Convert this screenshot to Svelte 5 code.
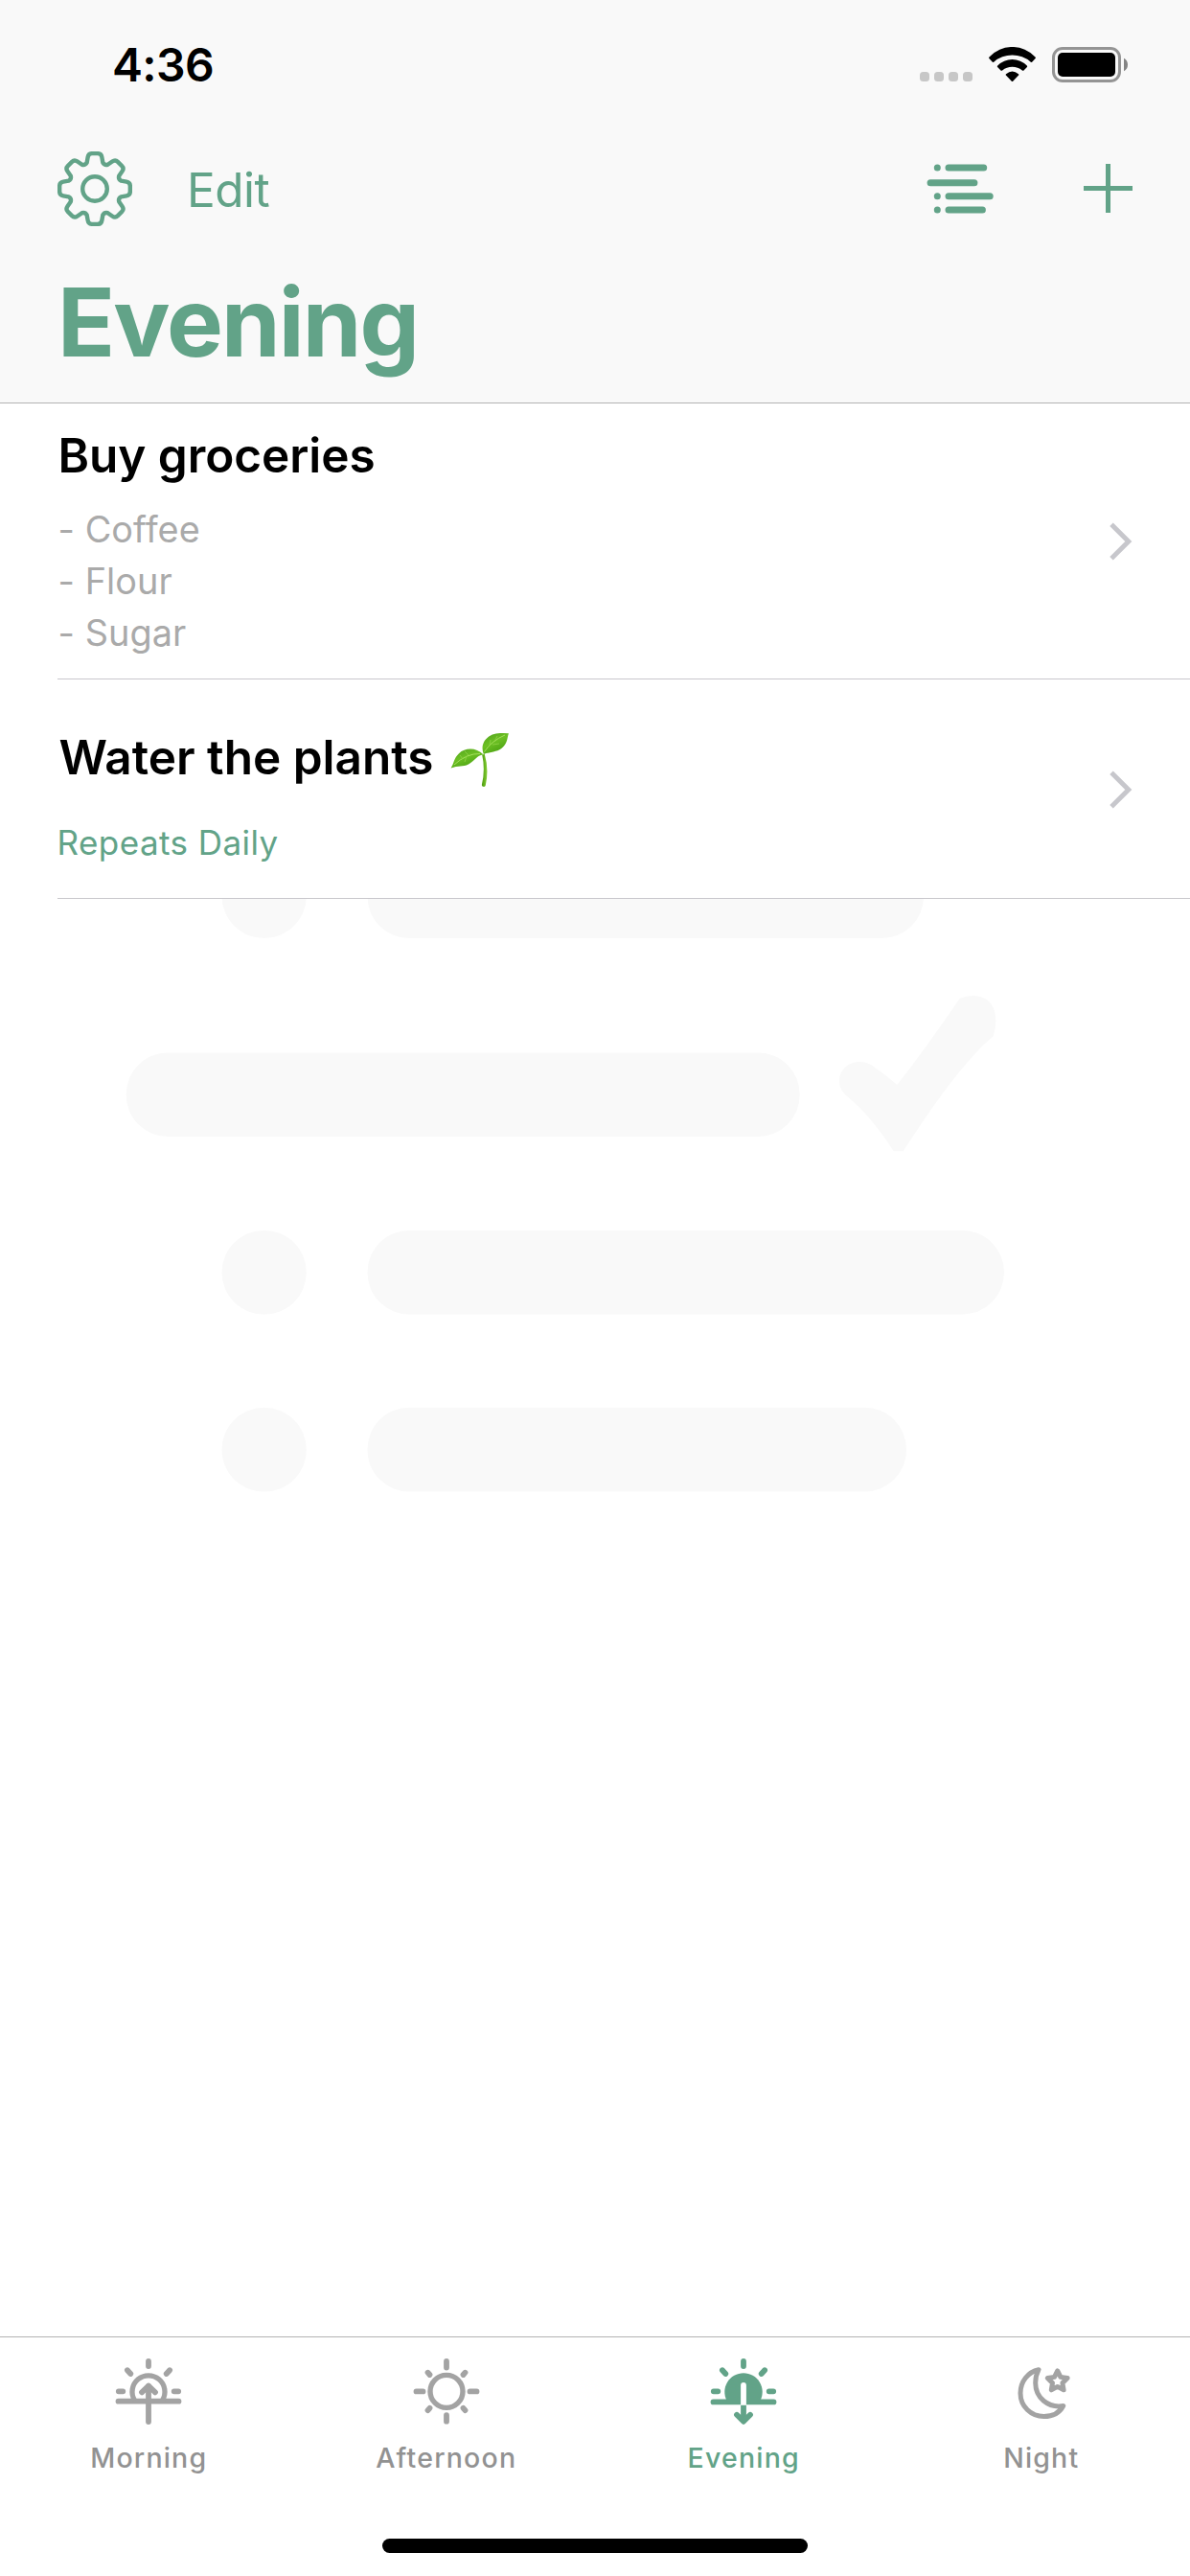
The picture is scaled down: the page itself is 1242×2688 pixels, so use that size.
<script>
  const tasks = [
    { title: 'Buy groceries', notes: ['- Coffee', '- Flour', '- Sugar'] },
    { title: 'Water the plants', sprout: true, repeats: 'Repeats Daily' }
  ];

  const tabs = [
    { id: 'morning', label: 'Morning' },
    { id: 'afternoon', label: 'Afternoon' },
    { id: 'evening', label: 'Evening' },
    { id: 'night', label: 'Night' }
  ];

  let active = $state('evening');

  // Eight-toothed cog outline: one tooth, rotated in 45° steps.
  function cog() {
    const rot = (x, y, k) => {
      const a = (k * Math.PI) / 4;
      const rx = x * Math.cos(a) - y * Math.sin(a);
      const ry = x * Math.sin(a) + y * Math.cos(a);
      return `${(rx / 3).toFixed(2)} ${(ry / 3).toFixed(2)}`;
    };
    let d = `M${rot(-25, -82, 0)}`;
    for (let k = 0; k < 8; k++) {
      const p = (x, y) => rot(x, y, k);
      d += `L${p(-22, -99)}Q${p(-20, -110.5)} ${p(-9, -110.5)}L${p(9, -110.5)}`;
      d += `Q${p(20, -110.5)} ${p(22, -99)}L${p(25, -82)}`;
      d += `Q${p(30.2, -73)} ${rot(-25, -82, k + 1)}`;
    }
    return d + 'Z';
  }
</script>

<div class="screen">
  <header>
    <div class="status">
      <span class="time">4:36</span>
      <div class="indicators">
        <div class="signal"><i></i><i></i><i></i><i></i></div>
        <svg class="wifi" width="49" height="37" viewBox="0 0 49 37">
          <path d="M.5 10.4A32.8 32.8 0 0 1 48.5 10.4Q49.3 11.2 48.6 12L45.4 15.6Q44.6 16.4 43.8 15.7A29.5 29.5 0 0 0 5.2 15.7Q4.4 16.4 3.6 15.6L.4 12Q-.3 11.2 .5 10.4Z" />
          <path d="M9.2 19.4A21.5 21.5 0 0 1 39.8 19.4Q40.6 20.2 39.9 20.9L36.5 24.4Q35.7 25 34.9 24.4A16.5 16.5 0 0 0 14.1 24.4Q13.3 25 12.5 24.4L9.1 20.9Q8.4 20.2 9.2 19.4Z" />
          <path d="M18 28.2Q24.5 22.6 31 28.2Q31.8 28.9 31.1 29.6L25.2 35.7Q24.5 36.4 23.8 35.7L17.9 29.6Q17.2 28.9 18 28.2Z" />
        </svg>
        <svg class="battery" width="79" height="37" viewBox="0 0 79 37">
          <rect x="1.5" y="1.5" width="69" height="34" rx="9.5" fill="none" stroke="#949494" stroke-width="3" />
          <rect x="6" y="6" width="60" height="25" rx="5" />
          <path d="M75 11.7Q79 14 79 18.5T75 25.3Z" fill="#848484" />
        </svg>
      </div>
    </div>

    <nav>
      <svg class="gear" width="78" height="78" viewBox="-39 -39 78 78" fill="none" stroke="currentColor" stroke-width="4.4" stroke-linejoin="round">
        <path d={cog()} />
        <circle r="12.8" />
      </svg>
      <span class="edit">Edit</span>
      <svg class="list-icon" width="72" height="54" viewBox="0 0 72 54" fill="currentColor">
        <circle cx="12.3" cy="5.1" r="3.5" /><rect x="20.5" y="1.6" width="43.7" height="7" rx="3.5" />
        <rect x="1.6" y="17.3" width="52.8" height="7" rx="3.5" />
        <circle cx="12.3" cy="34.8" r="3.5" /><rect x="20.5" y="31.3" width="50.2" height="7" rx="3.5" />
        <circle cx="12.3" cy="49" r="3.5" /><rect x="20.5" y="45.5" width="42.4" height="7" rx="3.5" />
      </svg>
      <svg class="plus" width="51" height="51" viewBox="0 0 51 51" fill="currentColor">
        <path d="M23 0h5v23h23v5H28v23h-5V28H0v-5h23Z" />
      </svg>
    </nav>

    <h1>Evening</h1>
  </header>

  <main>
    <svg class="watermark" width="1242" height="1160" viewBox="0 421 1242 1160" fill="#f9f9f9">
      <rect x="231.5" y="891" width="88.3" height="88" rx="44" />
      <rect x="383.5" y="891" width="580.5" height="88" rx="43.5" />
      <rect x="131.7" y="1098.5" width="703" height="87.5" rx="43.5" />
      <rect x="231.5" y="1284" width="88.3" height="87.5" rx="43.7" />
      <rect x="383.5" y="1284" width="664.5" height="87.5" rx="43.5" />
      <rect x="231.5" y="1468.8" width="88.3" height="87.7" rx="43.8" />
      <rect x="383.5" y="1468.8" width="562.5" height="87.7" rx="43.5" />
      <path transform="translate(820 1000) scale(.33333)" d="M545 125Q568 117 585 117C635 117 658 150 658 195Q658 220 650 244Q540 335 368 604H338Q265 490 192 432C172 414 168 398 168 384C168 350 195 324 232 324Q252 324 268 334Q310 362 349 396Q440 280 545 125Z" />
    </svg>

    <ul>
      {#each tasks as task}
        <li class:roomy={task.repeats}>
          <div class="body">
            <h2>
              <span>{task.title}</span>
              {#if task.sprout}
                <svg class="sprout" width="66" height="63" viewBox="0 0 66 63" role="img" aria-label="seedling">
                  <defs>
                    <linearGradient id="leaf" x1="0" y1="0" x2=".6" y2="1">
                      <stop offset="0" stop-color="#4f9f1c" />
                      <stop offset=".5" stop-color="#6cc024" />
                      <stop offset="1" stop-color="#49a010" />
                    </linearGradient>
                    <linearGradient id="stem" x1="0" y1="0" x2="1" y2="0">
                      <stop offset="0" stop-color="#4a9a0c" />
                      <stop offset="1" stop-color="#86cf35" />
                    </linearGradient>
                  </defs>
                  <path d="M35.2 25.5L37.8 25Q42.5 41 38.8 57.5Q38.4 59.3 36.2 58.8Q34.6 58.5 34.9 56.8Q38.6 41 35.2 25.5Z" fill="url(#stem)" />
                  <path d="M36.8 24.9C32.5 14.5 39.5 3.4 54 3.1Q59 3 62.9 3.2C61 9 61.8 12.500 57 17.500C52 22.800 44 22.500 36.800 24.900Z" fill="url(#leaf)" />
                  <path d="M36.400 25.300C29 17.800 17.500 18 11 24.200C5.500 29.500 6 34 2.600 39.600C10 36.300 15 38.500 21 35.400C27.500 32 29.500 26.500 36.400 25.300Z" fill="url(#leaf)" />
                  <path d="M37.500 22.500Q45 11 59 5M33 24.500Q19 24 6 36" fill="none" stroke="#a4de5c" stroke-width="1" />
                  <path d="M43 16l1-6M48 12l3-6M46 15l7-1M21 26l-4-4M15 30l-3-4M19 27l-2 6" fill="none" stroke="#8bd043" stroke-width=".9" />
                </svg>
              {/if}
            </h2>
            {#if task.notes}
              <div class="notes">
                {#each task.notes as note}<p>{note}</p>{/each}
              </div>
            {/if}
            {#if task.repeats}<p class="repeats">{task.repeats}</p>{/if}
          </div>
          <svg class="chevron" width="24" height="40" viewBox="0 0 24 40" fill="none" stroke="#c7c7cc" stroke-width="5">
            <path d="M2 2.300L19.800 20L2 37.700" />
          </svg>
        </li>
      {/each}
    </ul>
  </main>

  <footer>
    <div class="tabs">
      {#each tabs as tab}
        <button class:active={tab.id === active} onclick={() => (active = tab.id)}>
          <svg width="72" height="72" viewBox="0 0 72 72" fill="none" stroke="currentColor" stroke-width="5.8" stroke-linecap="round" stroke-linejoin="round">
            {#if tab.id === 'morning'}
              <path d="M36 5v5M13.900 14.200l3.400 3.800M58.100 14.200l-3.400 3.800M4.800 36.300h4.500M62.700 36.300h4.500M4.500 46.700h63M36 31v37" />
              <path d="M21.400 45.500A17 17 0 1 1 50.600 45.500" stroke-width="5.300" stroke-linecap="butt" />
              <path d="M29 37.300L36 30.500L43 37.300" />
              <path d="M33 36l3-4l3 4z" stroke-width="2" fill="currentColor" />
            {:else if tab.id === 'afternoon'}
              <circle cx="36" cy="36.400" r="17" stroke-width="5.400" />
              <path d="M36 5v6.500M36 61.200v6.500M4.500 36.400h7M60.500 36.400h7" />
              <path d="M16.500 16.700l2 2.300M55.500 16.700l-2 2.300M16.500 56.100l2-2.300M55.500 56.100l-2-2.300" />
            {:else if tab.id === 'evening'}
              <path d="M36 5v5M13.900 14.200l3.400 3.800M58.100 14.200l-3.400 3.800M4.800 36.300h4.500M62.700 36.300h4.500M4.500 47.400h63" />
              <path d="M18.500 46A19.700 19.700 0 1 1 53.500 46Z" fill="currentColor" stroke="none" />
              <path d="M33.100 50.500V30a2.900 2.900 0 0 1 5.800 0V50.500Z" fill="#fff" stroke="none" />
              <path d="M33.100 50.900h5.800V66h-5.800Z" fill="currentColor" stroke="none" />
              <path d="M29 60.800L36 67.800L43 60.800" />
            {:else}
              <path d="M33 13.700C22 16 14 26 14 38.200C14 52 25 62.500 38.500 62.500C47.500 62.500 55 58.500 58.700 51.500C43 54 29.700 43 29.700 27.500C29.700 22 31 17.500 33 13.700Z" stroke-width="5" />
              <path d="M52.700 14.900L55.900 21.400L63.100 22.500L57.900 27.600L59.100 34.800L52.700 31.400L46.300 34.800L47.500 27.600L42.300 22.500L49.500 21.400Z" stroke-width="5" />
            {/if}
          </svg>
          <span>{tab.label}</span>
        </button>
      {/each}
    </div>
    <div class="home"></div>
  </footer>
</div>

<style>
  :global(body) {
    margin: 0;
    background: #fff;
  }
  .screen {
    display: flex;
    flex-direction: column;
    width: 1242px;
    height: 2688px;
    background: #fff;
    font-family: Inter, 'Noto Sans', sans-serif;
    color: #000;
  }
  svg {
    display: block;
    flex: none;
  }
  h1, h2, p, ul {
    margin: 0;
    padding: 0;
  }

  header {
    box-sizing: border-box;
    height: 421px;
    background: #f9f9f9;
    border-bottom: 1px solid #b2b2b2;
    color: #62a388;
  }
  .status {
    display: flex;
    justify-content: space-between;
    height: 132px;
    padding: 0 65px 0 117px;
    color: #000;
  }
  .time {
    font-size: 48px;
    font-weight: 600;
    letter-spacing: -0.6px;
    line-height: 135px;
  }
  .indicators {
    display: flex;
    align-items: flex-start;
    padding-top: 49px;
  }
  .signal {
    display: flex;
    gap: 5px;
    margin: 26px 17px 0 0;
  }
  .signal i {
    width: 10px;
    height: 10px;
    border-radius: 3.5px;
    background: #c7c7c7;
  }
  .wifi {
    margin-right: 17px;
  }

  nav {
    display: flex;
    align-items: center;
    height: 130px;
    padding: 0 60px;
  }
  .edit {
    margin: 2px auto 0 57px;
    font-size: 49.5px;
    letter-spacing: -0.5px;
    line-height: 60px;
  }
  .list-icon {
    margin-right: 93px;
  }
  .plus {
    margin-top: -1px;
  }
  h1 {
    padding: 2px 0 0 60px;
    font-size: 99px;
    font-weight: 700;
    letter-spacing: -1.87px;
    line-height: 144px;
  }

  main {
    position: relative;
    flex: 1;
  }
  .watermark {
    position: absolute;
    top: 0;
    left: 0;
  }
  ul {
    position: relative;
    list-style: none;
  }
  li {
    display: flex;
    align-items: center;
    height: 288px;
    padding-right: 60px;
    background: linear-gradient(#c8c7cc, #c8c7cc) 60px 100% / 100% 1px no-repeat #fff;
  }
  li.roomy {
    height: 229px;
  }
  .body {
    flex: 1;
    align-self: flex-start;
    padding: 24px 0 0 60.500px;
  }
  .roomy .body {
    padding-top: 51px;
  }
  h2 {
    display: flex;
    align-items: center;
    gap: 15px;
    height: 60px;
    font-size: 49.5px;
    font-weight: 600;
    letter-spacing: -0.06px;
    line-height: 60px;
  }
  .roomy h2 {
    padding-left: 1px;
    letter-spacing: 0;
  }
  .sprout {
    margin-top: 7px;
  }
  .notes {
    margin-top: 20px;
    font-size: 37.8px;
    letter-spacing: 0.07px;
    line-height: 54px;
    color: #aaa;
  }
  .repeats {
    margin: 38px 0 0 -1px;
    font-size: 35px;
    letter-spacing: 0.45px;
    line-height: 42px;
    color: #62a388;
  }

  footer {
    display: flex;
    flex-direction: column;
    align-items: center;
    justify-content: space-between;
    box-sizing: border-box;
    height: 250px;
    padding-bottom: 24px;
    border-top: 1px solid #b2b2b2;
  }
  .tabs {
    display: grid;
    grid-template-columns: repeat(4, 1fr);
    width: 100%;
  }
  button {
    display: flex;
    flex-direction: column;
    align-items: center;
    gap: 17px;
    padding: 20px 0 0;
    border: 0;
    background: none;
    font: 500 28.5px / 34px Inter, 'Noto Sans', sans-serif;
    letter-spacing: 1.2px;
    color: #929292;
  }
  button svg {
    color: #a3a3a3;
  }
  button.active,
  button.active svg {
    color: #62a388;
  }
  .home {
    width: 444px;
    height: 15px;
    border-radius: 8px;
    background: #000;
  }
</style>
